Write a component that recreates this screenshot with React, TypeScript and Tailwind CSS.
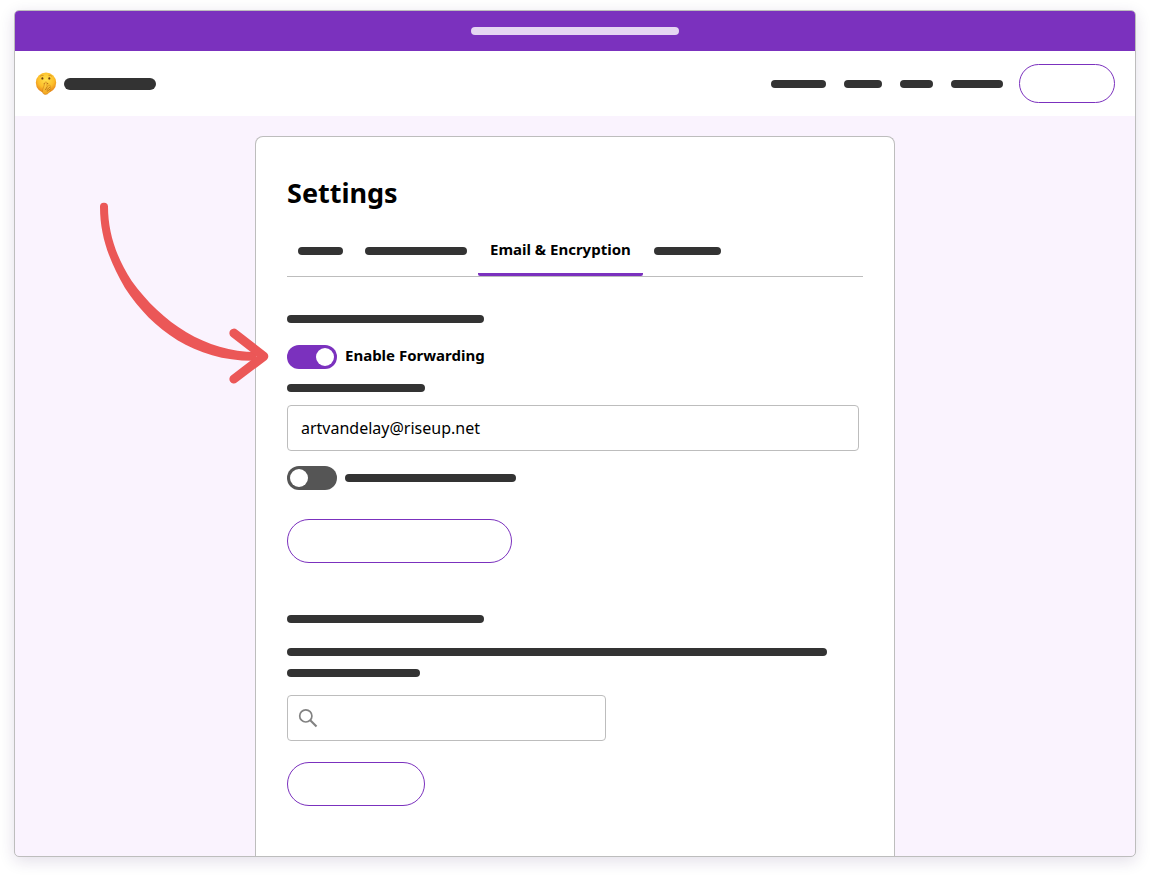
import { useState } from "react";
import type { ReactNode } from "react";

function Bar({ className = "h-2 bg-[#333333]" }: { className?: string }) {
  return <span aria-hidden="true" className={`block max-w-full rounded-full ${className}`} />;
}

function Toggle({ id, label, initial, children }: { id: string; label: string; initial: boolean; children: ReactNode }) {
  const [on, setOn] = useState(initial);
  return (
    <div className="flex h-6 items-center gap-2">
      <input
        id={id}
        type="checkbox"
        role="switch"
        aria-label={label}
        checked={on}
        onChange={(e) => setOn(e.target.checked)}
        className="flex h-6 w-[50px] shrink-0 cursor-pointer appearance-none items-center rounded-full bg-[#555555] px-[3px] before:block before:size-[18px] before:rounded-full before:bg-white checked:justify-end checked:bg-[#7b31be]"
      />
      <label htmlFor={id} className="cursor-pointer">
        {children}
      </label>
    </div>
  );
}

function ShushingFace() {
  return (
    <svg viewBox="0 0 22 24" className="h-6 w-[22px]" aria-hidden="true">
      <defs>
        <radialGradient id="face" cx="0.5" cy="0.35" r="0.65">
          <stop offset="0" stopColor="#ffe04e" />
          <stop offset="0.6" stopColor="#fdbf2b" />
          <stop offset="1" stopColor="#e5831a" />
        </radialGradient>
        <linearGradient id="hand" x1="0" y1="0" x2="0" y2="1">
          <stop offset="0" stopColor="#ffd84a" />
          <stop offset="1" stopColor="#f3a51f" />
        </linearGradient>
      </defs>
      <circle cx="11" cy="10.7" r="10.2" fill="url(#face)" />
      <ellipse cx="7.4" cy="6.4" rx="1" ry="1.2" fill="#6b3c10" />
      <ellipse cx="14.3" cy="6.4" rx="1" ry="1.2" fill="#6b3c10" />
      <path d="M5.2 4.1Q6.4 2.9 8.2 3.3M13.8 3.3Q15.6 2.9 16.8 4.1" fill="none" stroke="#c47a18" strokeWidth="0.6" strokeLinecap="round" />
      <path d="M9 11.6Q11 10.3 13 11.6" fill="none" stroke="#9c5410" strokeWidth="0.8" strokeLinecap="round" />
      <path
        d="M10 10.8c0-1.3 1.9-1.3 1.9 0l.1 4 1.9-1.4c1.2-.6 2 .5 1.3 1.5l.4 1.5c-.2 2.8-2.2 6-5.3 6-2.7 0-3.2-2.6-2.6-4.8z"
        fill="url(#hand)"
        stroke="#d1811b"
        strokeWidth="0.6"
      />
      <path d="M11.8 15.4l-1.3 2.3M14.6 15.4l-2.7 2.3M14.8 17.3l-2.6 1.9" fill="none" stroke="#a95e12" strokeWidth="0.7" strokeLinecap="round" />
    </svg>
  );
}

function SearchIcon({ className }: { className: string }) {
  return (
    <svg viewBox="0 0 24 24" fill="none" stroke="currentColor" className={className} aria-hidden="true">
      <circle cx="9.8" cy="9.9" r="6.1" strokeWidth="1.7" />
      <path d="M14 14.1L20.5 20.6" strokeWidth="2.1" />
    </svg>
  );
}

function PointerArrow() {
  return (
    <svg viewBox="0 0 180 190" className="pointer-events-none absolute top-[60px] -left-40 h-[190px] w-[180px]" aria-hidden="true">
      <path
        d="M4 10C4 40 14 65 29 91C57 134 101 165 160 163.7V155C110 155 66 126 35.7 84C20 60 12 35 12 9.5A4 4 0 0 0 4 10Z"
        fill="#eb5757"
      />
      <path d="M137.9 136.1L167.8 159.3L137.9 182" fill="none" stroke="#eb5757" strokeWidth="9" strokeLinecap="round" strokeLinejoin="round" />
    </svg>
  );
}

const outline = "cursor-pointer rounded-full border border-[#7b31be] bg-white";
const field = "h-[46px] w-full rounded border border-[#bdbdbd] bg-white outline-none focus:border-[#7b31be]";

export default function App() {
  const [email, setEmail] = useState("artvandelay@riseup.net");
  return (
    <div className="flex min-h-screen flex-col bg-white px-[14px] pt-[10px] pb-[18px] font-['Noto_Sans',sans-serif] text-black">
      <div className="flex flex-1 flex-col overflow-hidden rounded-[5px] border border-[#bdbdbd] bg-[#faf3fe] shadow-[0_4px_16px_rgba(50,20,90,0.14)]">
        <div className="flex h-10 items-center justify-center bg-[#7b31be]">
          <Bar className="h-2 w-52 bg-[#e5d6f2]" />
        </div>

        <header className="flex h-[65px] items-center justify-between bg-white px-5">
          <a href="#home" aria-label="Home" className="flex items-center gap-[7px]">
            <ShushingFace />
            <Bar className="h-3 w-[92px] bg-[#333333]" />
          </a>
          <div className="flex items-center gap-4">
            <nav className="flex items-center gap-[18px]">
              <a href="#features" aria-label="Features"><Bar className="h-2 w-[55px] bg-[#333333]" /></a>
              <a href="#about" aria-label="About"><Bar className="h-2 w-[38px] bg-[#333333]" /></a>
              <a href="#help" aria-label="Help"><Bar className="h-2 w-[33px] bg-[#333333]" /></a>
              <a href="#account" aria-label="Account"><Bar className="h-2 w-[52px] bg-[#333333]" /></a>
            </nav>
            <button type="button" aria-label="Log out" className={`h-[39px] w-24 ${outline}`} />
          </div>
        </header>

        <main className="flex flex-1 flex-col items-center px-5 pt-5">
          <section className="relative w-full max-w-[640px] flex-1 rounded-t-lg border border-b-0 border-[#bdbdbd] bg-white px-[31px] pt-9 pb-[50px]">
            <h1 className="text-[27px] leading-10 font-bold">Settings</h1>

            <div role="tablist" className="mt-3 flex h-[52px] border-b border-[#bdbdbd]">
              <button type="button" role="tab" aria-label="General" className="px-[11px]">
                <Bar className="h-2 w-[45px] bg-[#333333]" />
              </button>
              <button type="button" role="tab" aria-label="Notifications" className="px-[11px]">
                <Bar className="h-2 w-[102px] bg-[#333333]" />
              </button>
              <button type="button" role="tab" aria-selected="true" className="rounded-[2px] border-b-[3px] border-[#7b31be] px-3 text-[15px] leading-6 font-bold">
                Email &amp; Encryption
              </button>
              <button type="button" role="tab" aria-label="Security" className="px-[11px]">
                <Bar className="h-2 w-[67px] bg-[#333333]" />
              </button>
            </div>

            <form className="flex flex-col items-start" onSubmit={(e) => e.preventDefault()}>
              <Bar className="mt-[38px] h-2 w-[197px] bg-[#333333]" />
              <div className="mt-[22px]">
                <Toggle id="forwarding" label="Enable Forwarding" initial={true}>
                  <span className="block pb-1 text-[15px] leading-5 font-bold">Enable Forwarding</span>
                </Toggle>
              </div>
              <label htmlFor="email" aria-label="Forwarding address" className="mt-[15px]">
                <Bar className="h-2 w-[138px] bg-[#333333]" />
              </label>
              <div className="mt-[13px] w-full max-w-[572px]">
                <input
                  id="email"
                  type="email"
                  aria-label="Forwarding address"
                  value={email}
                  onChange={(e) => setEmail(e.target.value)}
                  className={`px-[13px] text-base ${field}`}
                />
              </div>
              <div className="mt-[15px]">
                <Toggle id="encrypt" label="Encrypt forwarded mail" initial={false}>
                  <Bar className="h-2 w-[171px] bg-[#333333]" />
                </Toggle>
              </div>
              <button type="submit" aria-label="Save forwarding" className={`mt-[29px] h-11 w-[225px] ${outline}`} />
            </form>

            <form className="mt-[52px] flex flex-col items-start" onSubmit={(e) => e.preventDefault()}>
              <Bar className="h-2 w-[197px] bg-[#333333]" />
              <Bar className="mt-[25px] h-2 w-[540px] bg-[#333333]" />
              <Bar className="mt-[13px] h-2 w-[133px] bg-[#333333]" />
              <div className="relative mt-[18px] w-full max-w-[319px]">
                <input type="search" aria-label="Search" className={`pr-3 pl-10 text-base ${field}`} />
                <SearchIcon className="pointer-events-none absolute inset-y-0 left-[9px] my-auto size-6 text-[#828282]" />
              </div>
              <button type="submit" aria-label="Add" className={`mt-[21px] h-11 w-[138px] ${outline}`} />
            </form>

            <PointerArrow />
          </section>
        </main>
      </div>
    </div>
  );
}
